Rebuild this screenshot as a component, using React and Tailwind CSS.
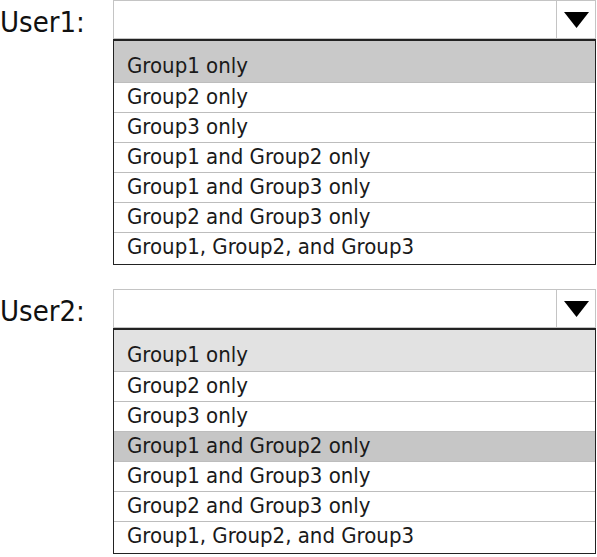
const options = [
  "Group1 only",
  "Group2 only",
  "Group3 only",
  "Group1 and Group2 only",
  "Group1 and Group3 only",
  "Group2 and Group3 only",
  "Group1, Group2, and Group3",
];

const Arrow = () => (
  <svg width="25" height="16" viewBox="0 0 25 16">
    <polygon points="0,0 25,0 12.5,16" fill="#000" />
  </svg>
);

const Dropdown = ({ label, first, picked }) => (
  <div className="flex">
    <div className="w-[113px] pt-[4px] text-[29px] leading-[36px] text-[#111]">
      {label}
    </div>
    <div className="flex-1 mr-[1px]">
      <div className="flex h-[39px] border border-[#c4c4c4] bg-white">
        <div className="flex-1" />
        <div className="w-[39px] flex items-center justify-center border-l border-[#c4c4c4]">
          <Arrow />
        </div>
      </div>
      <div className="border border-t-2 border-[#222] bg-white pb-[2px]">
        {options.map((text, index) => (
          <div
            key={index}
            className={
              (index === 0 ? "h-[41px] pt-[11px] " : "h-[30px] border-t border-[#bdbdbd] ") +
              (index === 0 ? first : index === picked ? "bg-[#c6c6c6] " : "bg-white ") +
              "pl-[13px] text-[22px] leading-[28px] text-[#1a1a1a]"
            }
          >
            {text}
          </div>
        ))}
      </div>
    </div>
  </div>
);

export default function App() {
  return (
    <div
      className="w-[597px] h-[557px] bg-white overflow-hidden"
      style={{ fontFamily: '"DejaVu Sans Condensed", "DejaVu Sans", sans-serif' }}
    >
      <Dropdown label="User1:" first="bg-[#c9c9c9] " picked={-1} />
      <div className="h-[24px]" />
      <Dropdown label="User2:" first="bg-[#e2e2e2] " picked={3} />
    </div>
  );
}
